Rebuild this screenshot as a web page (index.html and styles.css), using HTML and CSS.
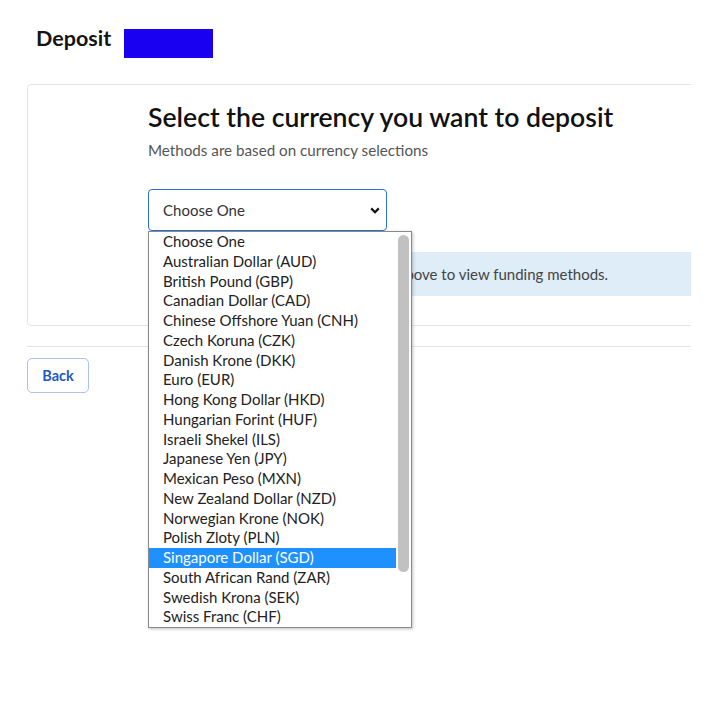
FILE: index.html
```html
<!DOCTYPE html>
<html lang="en">
<head>
<meta charset="utf-8">
<title>Deposit</title>
<link rel="stylesheet" href="styles.css">
</head>
<body>
<div class="page">
  <header class="top">
    <h1 class="title">Deposit</h1>
    <span class="redact"></span>
  </header>
  <div class="frame">
    <section class="card">
      <h2 class="heading">Select the currency you want to deposit</h2>
      <p class="sub">Methods are based on currency selections</p>
      <div class="select">
        <span class="select-text">Choose One</span>
        <svg class="chev" width="10" height="7" viewBox="0 0 10 7"><path d="M1.2 1.4 L5 5.2 L8.8 1.4" fill="none" stroke="#111" stroke-width="2.2"/></svg>
      </div>
      <div class="info">Please select a currency from the list above to view funding methods.</div>
    </section>
    <hr class="rule">
    <button class="back">Back</button>
  </div>
  <div class="dropdown">
    <ul class="options">
      <li>Choose One</li>
      <li>Australian Dollar (AUD)</li>
      <li>British Pound (GBP)</li>
      <li>Canadian Dollar (CAD)</li>
      <li>Chinese Offshore Yuan (CNH)</li>
      <li>Czech Koruna (CZK)</li>
      <li>Danish Krone (DKK)</li>
      <li>Euro (EUR)</li>
      <li>Hong Kong Dollar (HKD)</li>
      <li>Hungarian Forint (HUF)</li>
      <li>Israeli Shekel (ILS)</li>
      <li>Japanese Yen (JPY)</li>
      <li>Mexican Peso (MXN)</li>
      <li>New Zealand Dollar (NZD)</li>
      <li>Norwegian Krone (NOK)</li>
      <li>Polish Zloty (PLN)</li>
      <li class="active">Singapore Dollar (SGD)</li>
      <li>South African Rand (ZAR)</li>
      <li>Swedish Krona (SEK)</li>
      <li>Swiss Franc (CHF)</li>
    </ul>
    <div class="scrollbar"><div class="thumb"></div></div>
  </div>
</div>
</body>
</html>
```
FILE: styles.css
```css
* { box-sizing: border-box; }
html, body { margin: 0; padding: 0; background: #fff; }
body { font-family: "Lato", "Liberation Sans", sans-serif; color: #222; }
.page { position: relative; width: 705px; height: 705px; overflow: hidden; }
.top { display: flex; align-items: flex-start; gap: 13px; padding: 29px 0 0 36px; height: 58px; }
.title { margin: -5px 0 0; font-size: 21.5px; font-weight: 700; color: #151515; line-height: 29px; }
.redact { display: block; width: 89px; height: 29px; background: #1a00f0; }
.frame { margin: 26px 0 0 27px; width: 664px; overflow: hidden; }
.card { width: 700px; height: 242px; border: 1px solid #e3e3e3; border-radius: 4px; padding: 16px 0 0 120px; }
.heading { margin: 0; font-size: 26.6px; font-weight: 600; color: #111; line-height: 32px; }
.sub { margin: 8px 0 0; font-size: 15.2px; color: #555; line-height: 18px; }
.select { margin-top: 30px; width: 239px; height: 42px; border: 1px solid #2f6fd6; border-radius: 4px; display: flex; align-items: center; justify-content: space-between; padding: 0 5px 0 14px; }
.select-text { font-size: 15px; color: #333; }
.chev { margin-right: 1px; }
.info { margin-top: 21px; height: 44px; background: #deedf8; font-size: 15px; color: #444; line-height: 44px; padding-left: 6px; width: 560px; white-space: nowrap; }
.rule { margin: 20px 0 0; border: 0; border-top: 1px solid #e3e3e3; width: 664px; }
.back { margin-top: 11px; width: 62px; height: 35px; border: 1px solid #a9c3ea; border-radius: 5px; background: #fff; color: #2158c0; font-family: "Lato", "Liberation Sans", sans-serif; font-weight: 700; font-size: 14.5px; padding: 0; }
.dropdown { position: absolute; left: 148px; top: 231px; width: 264px; height: 397px; border: 1px solid #8a8a8a; background: #fff; box-shadow: 1px 1px 3px rgba(0,0,0,0.25); display: flex; }
.options { list-style: none; margin: 0; padding: 0; flex: 1; }
.options li { height: 19.75px; line-height: 19.75px; padding-left: 14px; font-size: 15px; color: #222; white-space: nowrap; }
.options li.active { background: #1e90ff; color: #fff; }
.scrollbar { width: 15px; padding: 3px 2px 0 2px; }
.thumb { width: 11px; height: 337px; background: #c1c1c1; border-radius: 6px; }
```
